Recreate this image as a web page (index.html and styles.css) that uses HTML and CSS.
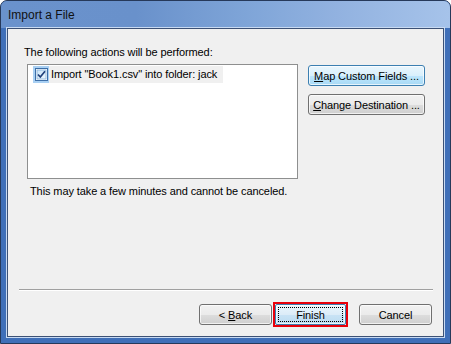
FILE: index.html
```html
<!DOCTYPE html>
<html>
<head>
<meta charset="utf-8">
<link rel="stylesheet" href="styles.css">
</head>
<body>
<div class="win">
  <div class="title">Import a File</div>
  <div class="client">
    <div class="main">
      <div class="lbl">The following actions will be performed:</div>
      <div class="row">
        <div class="list">
          <div class="item">
            <span class="chk-cell">
              <svg class="chk" width="13" height="13" viewBox="0 0 13 13">
                <defs>
                  <linearGradient id="cg" x1="0" y1="0" x2="1" y2="1">
                    <stop offset="0" stop-color="#c9e4f8"/>
                    <stop offset="1" stop-color="#eef7fd"/>
                  </linearGradient>
                </defs>
                <rect x="0.5" y="0.5" width="12" height="12" fill="#fff" stroke="#3d6fa8"/>
                <rect x="2" y="2" width="9" height="9" fill="url(#cg)" stroke="#86aed6" stroke-width="0.8"/>
                <path d="M3 6.5 L5.3 9 L10 3.3" fill="none" stroke="#1f3f79" stroke-width="1.7"/>
              </svg>
            </span>
            <span class="item-text">Import "Book1.csv" into folder: jack</span>
          </div>
        </div>
        <div class="side">
          <button class="btn hot"><u>M</u>ap Custom Fields ...</button>
          <button class="btn"><u>C</u>hange Destination ...</button>
        </div>
      </div>
      <div class="note">This may take a few minutes and cannot be canceled.</div>
    </div>
    <div class="sep"></div>
    <div class="foot">
      <button class="btn wide">&lt; <u>B</u>ack</button>
      <span class="mark"><button class="btn def">Finish</button></span>
      <button class="btn wide">Cancel</button>
    </div>
  </div>
</div>
</body>
</html>
```

FILE: styles.css
```css
html, body {
  margin: 0;
  padding: 0;
  background: #ffffff;
}
.win {
  width: 451px;
  height: 344px;
  box-sizing: border-box;
  padding: 0 6px 6px 6px;
  display: flex;
  flex-direction: column;
  border-radius: 7px 7px 0 0;
  border: 1px solid #26395a;
  background: #3f6fb8;
  font-family: "Liberation Sans", Arial, sans-serif;
  font-size: 11px;
  letter-spacing: -0.1px;
  color: #000;
  margin: 0;
}
.title {
  height: 27px;
  box-sizing: border-box;
  padding: 7px 0 0 1px;
  font-family: "Liberation Sans", Arial, sans-serif;
  font-size: 12px;
  letter-spacing: 0;
  color: #111;
  background: linear-gradient(90deg, #6a92cc 0%, #6991cb 30%, #7fa5d8 55%, #92b2e0 75%, #a6c3ea 100%);
  margin: 0 -6px;
  padding-left: 7px;
  border-radius: 6px 6px 0 0;
}
.client {
  flex: 1;
  display: flex;
  flex-direction: column;
  background: #f0f0f0;
  border: 1px solid #3c5175;
  box-shadow: 0 0 0 1px #c8daf2;
}
.main {
  flex: 1;
  padding: 16px 0 0 16px;
}
.lbl {
  height: 15px;
  line-height: 15px;
}
.row {
  display: flex;
  margin-top: 4px;
}
.list {
  margin-left: 3px;
  width: 271px;
  height: 115px;
  box-sizing: border-box;
  border: 1px solid #8e8f8f;
  background: #fff;
  padding: 1px 0 0 5px;
}
.item {
  display: flex;
  height: 17px;
}
.chk-cell {
  width: 16px;
  height: 17px;
  background: #a9d0f3;
  display: flex;
  align-items: center;
  justify-content: center;
}
.chk {
  display: block;
}
.item-text {
  background: #f0f0f0;
  padding: 0 6px 0 2px;
  line-height: 17px;
  height: 17px;
}
.side {
  display: flex;
  flex-direction: column;
  margin-left: 10px;
  margin-top: 1px;
  gap: 8px;
}
.btn {
  font-family: "Liberation Sans", Arial, sans-serif;
  font-size: 11px;
  letter-spacing: -0.1px;
  color: #000;
  height: 21px;
  width: 117px;
  padding: 0;
  box-sizing: border-box;
  border: 1px solid #707070;
  border-radius: 3px;
  background: linear-gradient(#f2f2f2 0%, #ebebeb 50%, #dddddd 51%, #cfcfcf 100%);
  box-shadow: inset 0 0 0 1px rgba(255,255,255,0.7);
  text-align: center;
  line-height: 18px;
  margin: 0;
}
.btn.hot {
  border-color: #3c7fb1;
  background: linear-gradient(#eaf6fd 0%, #d9f0fc 50%, #bee6fd 51%, #a7d9f5 100%);
}
.btn.wide {
  width: 73px;
}
.note {
  margin: 5px 0 0 6px;
  height: 15px;
  line-height: 15px;
}
.sep {
  height: 1px;
  background: #a0a0a0;
  margin: 0 10px 0 11px;
  box-shadow: 0 1px 0 #ffffff;
}
.foot {
  display: flex;
  justify-content: flex-end;
  align-items: center;
  padding: 12px 11px 9px 0;
}
.mark {
  display: block;
  border: 2px solid #e8000b;
  margin: 0 11px 0 1px;
}
.btn.def {
  width: 71px;
  display: block;
  border-color: #3c7fb1;
  border-radius: 2px;
  background: linear-gradient(#eaf6fd 0%, #dcecf8 50%, #c9e3f5 51%, #bcdcf2 100%);
  outline: 1px dotted #000;
  outline-offset: -4px;
}
```
